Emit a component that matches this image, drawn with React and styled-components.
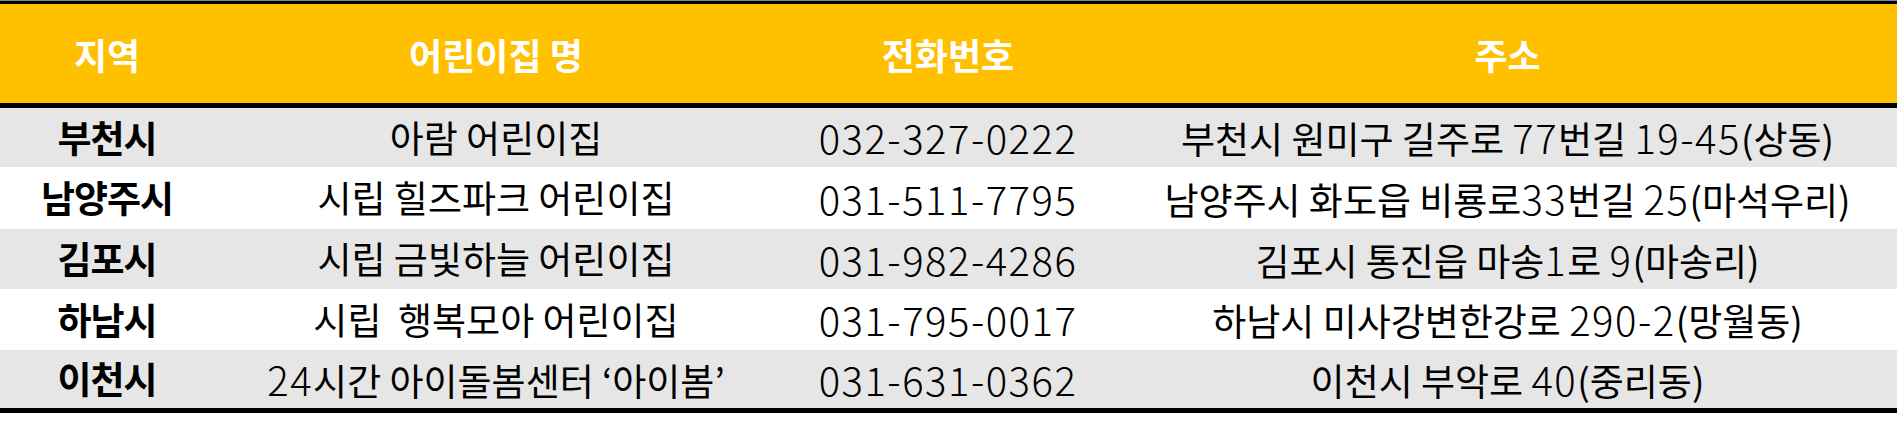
import React from 'react'
import styled, { createGlobalStyle } from 'styled-components'

const GlobalStyle = createGlobalStyle`
  html, body {
    margin: 0;
    padding: 0;
    background: #ffffff;
  }
  body {
    font-family: "Noto Sans CJK KR", "Noto Sans", sans-serif;
  }
`

const columns = [
  { label: '지역', width: 214 },
  { label: '어린이집 명', width: 564 },
  { label: '전화번호', width: 340 },
  { label: '주소', width: 779 },
]

// heights include half of the collapsed rules above/below
const rows = [
  { region: '부천시', name: '아람 어린이집', phone: '032-327-0222', address: '부천시 원미구 길주로 77번길 19-45(상동)', height: 61 },
  { region: '남양주시', name: '시립 힐즈파크 어린이집', phone: '031-511-7795', address: '남양주시 화도읍 비룡로33번길 25(마석우리)', height: 62 },
  { region: '김포시', name: '시립 금빛하늘 어린이집', phone: '031-982-4286', address: '김포시 통진읍 마송1로 9(마송리)', height: 60 },
  { region: '하남시', name: '시립  행복모아 어린이집', phone: '031-795-0017', address: '하남시 미사강변한강로 290-2(망월동)', height: 61 },
  { region: '이천시', name: '24시간 아이돌봄센터 ‘아이봄’', phone: '031-631-0362', address: '이천시 부악로 40(중리동)', height: 61 },
]

const Wrap = styled.div`
  width: 1897px;
  border-top: 1px solid #8a8a8a;
`

const Table = styled.table`
  width: 100%;
  border-collapse: collapse;
  table-layout: fixed;
  border-top: 3px solid #000;
  border-bottom: 5px solid #000;
`

const HeadRow = styled.tr`
  height: 103px;
  background: #ffc000;
  border-bottom: 5px solid #000;
`

const HeadCell = styled.th`
  padding: 0;
  color: #ffffff;
  font-size: 36px;
  font-weight: 700;
  text-align: center;
  vertical-align: middle;
  white-space: pre;
`

const Row = styled.tr`
  background: ${p => (p.$shaded ? '#e7e6e6' : '#ffffff')};
`

const Cell = styled.td`
  padding: 0;
  color: #000;
  font-size: 37px;
  font-weight: ${p => (p.$bold ? 700 : 400)};
  letter-spacing: ${p => (p.$bold ? '-1px' : '0')};
  text-align: center;
  vertical-align: middle;
  white-space: pre;
  line-height: 1;
`

// digits in the source font run wider and lighter than the hangul
const Num = styled.span`
  font-size: 40px;
  font-weight: 300;
  letter-spacing: 1.5px;
`

const withNums = text =>
  text.split(/([0-9-]+)/).map((part, i) =>
    /^[0-9-]+$/.test(part) ? <Num key={i}>{part}</Num> : part
  )

export default function App() {
  return (
    <>
      <GlobalStyle />
      <Wrap>
        <Table>
          <colgroup>
            {columns.map(c => (
              <col key={c.label} style={{ width: c.width }} />
            ))}
          </colgroup>
          <thead>
            <HeadRow>
              {columns.map(c => (
                <HeadCell key={c.label}>{c.label}</HeadCell>
              ))}
            </HeadRow>
          </thead>
          <tbody>
            {rows.map((r, i) => (
              <Row key={r.region} $shaded={i % 2 === 0} style={{ height: r.height }}>
                <Cell $bold>{r.region}</Cell>
                <Cell>{withNums(r.name)}</Cell>
                <Cell>{withNums(r.phone)}</Cell>
                <Cell>{withNums(r.address)}</Cell>
              </Row>
            ))}
          </tbody>
        </Table>
      </Wrap>
    </>
  )
}
